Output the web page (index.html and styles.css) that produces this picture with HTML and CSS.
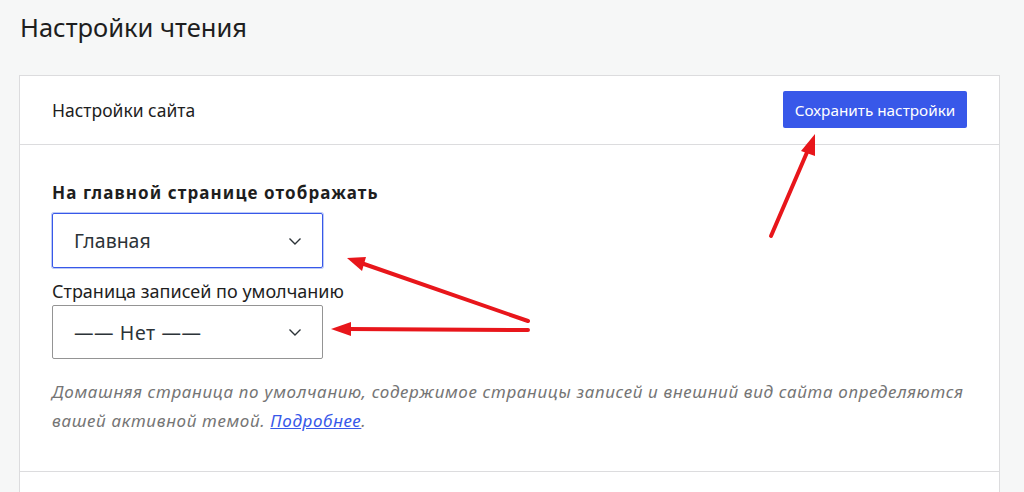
FILE: index.html
```html
<!DOCTYPE html>
<html lang="ru">
<head>
    <meta charset="UTF-8">
    <meta name="viewport" content="width=device-width, initial-scale=1.0">
    <title>Настройки чтения</title>
    <link rel="stylesheet" href="styles.css">
</head>
<body>
    <div class="page">
        <h1 class="page-title">Настройки чтения</h1>

        <div class="card">
            <div class="card-header">
                <span class="card-title">Настройки сайта</span>
                <button class="btn-primary" type="button">Сохранить настройки</button>
            </div>

            <div class="card-body">
                <label class="field-label" for="show-on-front">На главной странице отображать</label>
                <div class="select is-focused">
                    <span class="select-value">Главная</span>
                    <svg class="chevron" width="16" height="16" viewBox="0 0 16 16"><path d="M2.5 5.5l5.5 5.5 5.5-5.5" fill="none" stroke="#2c3338" stroke-width="1.4"/></svg>
                </div>

                <label class="sub-label" for="page-for-posts">Страница записей по умолчанию</label>
                <div class="select">
                    <span class="select-value dashed">—— Нет ——</span>
                    <svg class="chevron" width="16" height="16" viewBox="0 0 16 16"><path d="M2.5 5.5l5.5 5.5 5.5-5.5" fill="none" stroke="#2c3338" stroke-width="1.4"/></svg>
                </div>

                <p class="help">Домашняя страница по умолчанию, содержимое страницы записей и внешний вид сайта определяются<br>вашей активной темой. <a href="#">Подробнее</a>.</p>
            </div>

            <div class="card-footer"></div>
        </div>
    </div>

    <!-- annotation arrows drawn over the screenshot -->
    <svg class="arrows" width="1024" height="492" viewBox="0 0 1024 492">
        <g stroke="#e8161b" stroke-width="4" stroke-linecap="round">
            <line x1="771" y1="236" x2="808" y2="150"/>
            <line x1="528" y1="321" x2="364" y2="264"/>
            <line x1="528" y1="330" x2="348" y2="329"/>
        </g>
        <g fill="#e8161b">
            <polygon points="815,134 801,151 815,156"/>
            <polygon points="347,258 366,257 362,271"/>
            <polygon points="331,329 351,322 351,336"/>
        </g>
    </svg>
</body>
</html>
```

FILE: styles.css
```css
body {
    margin: 0;
    background: #f6f7f7;
    font-family: "Noto Sans", "Open Sans", sans-serif;
    color: #1e1e1e;
    width: 1024px;
    height: 492px;
    overflow: hidden;
    position: relative;
}

.page {
    padding: 0 24px 0 19px;
}

.page-title {
    margin: 0;
    padding: 9px 0 0 1px;
    height: 75px;
    box-sizing: border-box;
    font-size: 25.5px;
    line-height: 36px;
    font-weight: 400;
    color: #1e1e1e;
}

.card {
    width: 981px;
    background: #fff;
    border: 1px solid #dcdcde;
    box-sizing: border-box;
}

.card-header {
    height: 69px;
    display: flex;
    align-items: center;
    justify-content: space-between;
    padding: 0 32px;
    border-bottom: 1px solid #dcdcde;
    box-sizing: border-box;
}

.card-title {
    font-size: 17.5px;
    color: #1e1e1e;
}

.btn-primary {
    height: 37px;
    width: 184px;
    background: #3858e9;
    color: #fff;
    border: none;
    border-radius: 2px;
    font-family: inherit;
    font-size: 15.3px;
    padding: 0;
    margin-top: -1px;
}

.card-body {
    padding: 37px 32px 36px;
    border-bottom: 1px solid #dcdcde;
}

.field-label {
    display: block;
    font-size: 17px;
    font-weight: 700;
    letter-spacing: 1.1px;
    line-height: 22px;
    margin-bottom: 9px;
}

.select {
    width: 271px;
    height: 54px;
    box-sizing: border-box;
    border: 1px solid #949494;
    border-radius: 2px;
    display: flex;
    align-items: center;
    justify-content: space-between;
    padding: 0 19px 0 21px;
}

.select.is-focused {
    height: 55px;
    border: 1.5px solid #3858e9;
    box-shadow: 0 0 0 1px #bccaf6;
}

.select-value {
    font-size: 19.5px;
    color: #2c3338;
}

.select-value.dashed {
    letter-spacing: 0.6px;
}

.sub-label {
    display: block;
    font-size: 18px;
    line-height: 22px;
    margin: 12px 0 3px;
    color: #1e1e1e;
}

.help {
    margin: 18px 0 0;
    font-size: 17px;
    letter-spacing: 0.65px;
    line-height: 29px;
    font-style: italic;
    color: #757575;
    white-space: nowrap;
}

.help a {
    color: #3858e9;
}

.card-footer {
    height: 40px;
}

.arrows {
    position: absolute;
    left: 0;
    top: 0;
    pointer-events: none;
}
```
